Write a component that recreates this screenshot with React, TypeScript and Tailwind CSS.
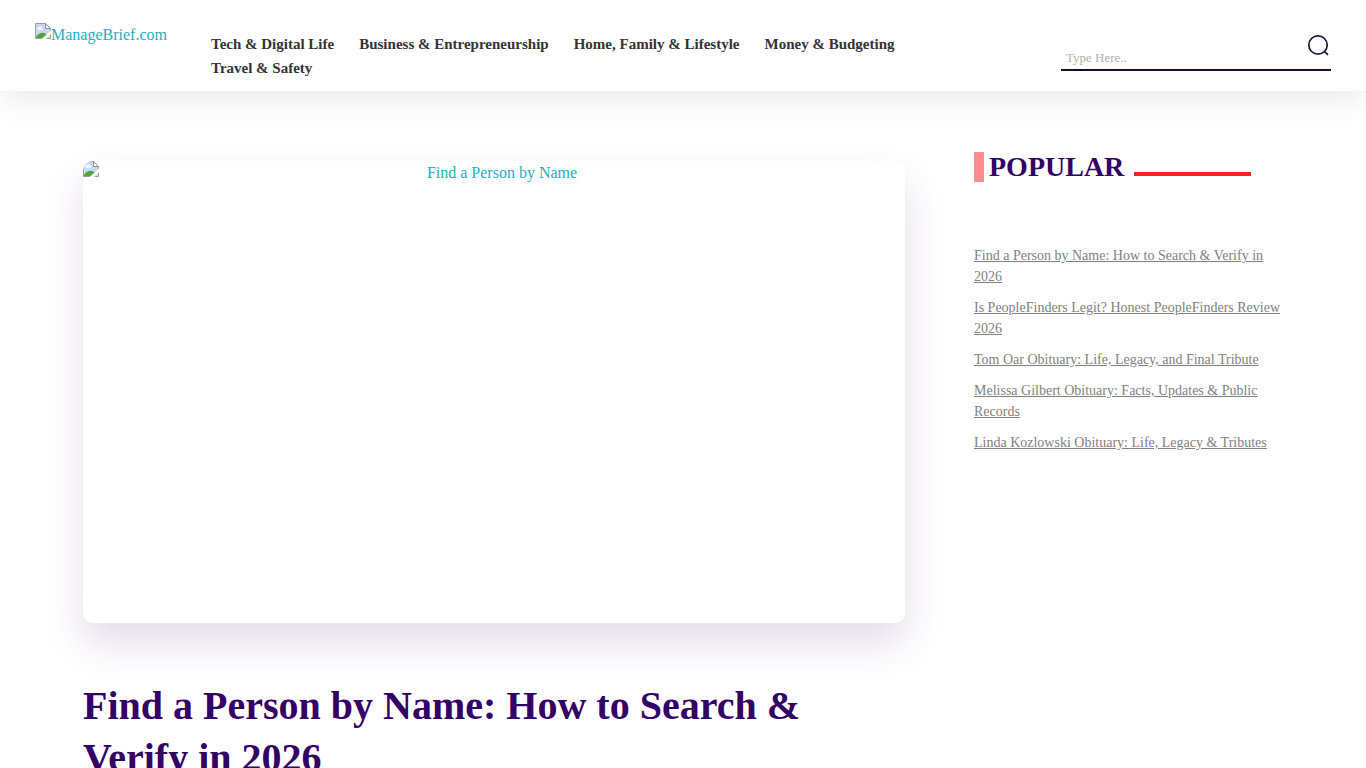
import { useState } from 'react';

const navLinks = [
  'Tech & Digital Life',
  'Business & Entrepreneurship',
  'Home, Family & Lifestyle',
  'Money & Budgeting',
  'Travel & Safety',
];

const popularPosts = [
  'Find a Person by Name: How to Search & Verify in 2026',
  'Is PeopleFinders Legit? Honest PeopleFinders Review 2026',
  'Tom Oar Obituary: Life, Legacy, and Final Tribute',
  'Melissa Gilbert Obituary: Facts, Updates & Public Records',
  'Linda Kozlowski Obituary: Life, Legacy & Tributes',
];

function MissingImageIcon() {
  return (
    <svg
      viewBox="0 0 16 16"
      className="w-4 h-4 flex-none"
      aria-hidden="true"
    >
      <path d="M0.5 0.5H10.5L15.5 5.5V15.5H0.5Z" fill="#c9d9f4" />
      <path d="M2.6 6.5a1.5 1.5 0 0 1 1.4-2 1.9 1.9 0 0 1 3.5.5A1.1 1.1 0 0 1 7.4 6.8H3.2Z" fill="#fff" />
      <path d="M1 15V14C3 11.2 5.2 9.8 7.5 9.8S11 10.8 12.2 12.5L10 15Z" fill="#4ea63a" />
      <path d="M0.5 15.5V0.5H10.5L15.5 5.5V15.5Z" fill="none" stroke="#9c9c9c" />
      <path d="M10.5 0.5V5.5H15.5Z" fill="#fff" stroke="#8f8f8f" />
      <path d="M6.5 16L16 7.5V11L11 16Z" fill="#fff" />
    </svg>
  );
}

function Header() {
  const [search, setSearch] = useState('');

  return (
    <header className="flex items-start bg-white px-[35px] pb-[11px] shadow-[0_10px_30px_rgba(0,0,0,0.08)]">
      <a
        href="#"
        className="mt-[23px] flex w-[176px] flex-none items-start text-[#1cafc0]"
      >
        <MissingImageIcon />
        <span className="text-base leading-6">ManageBrief.com</span>
      </a>
      <nav className="mt-8 min-w-0 flex-1">
        <ul className="flex flex-wrap gap-x-[25px]">
          {navLinks.map((link) => (
            <li key={link}>
              <a
                href="#"
                className="block text-[15px] leading-6 font-bold text-[#333]"
              >
                {link}
              </a>
            </li>
          ))}
        </ul>
      </nav>
      <form
        role="search"
        onSubmit={(e) => e.preventDefault()}
        className="mt-8 ml-12 flex h-[39px] w-[270px] flex-none items-start border-b-2 border-[#1b0a2a]"
      >
        <input
          type="text"
          aria-label="Search"
          value={search}
          onChange={(e) => setSearch(e.target.value)}
          placeholder="Type Here.."
          className="mt-4 h-5 min-w-0 flex-1 bg-transparent px-[5px] text-[13px] text-[#333] placeholder:text-[#b0b0b0] focus:outline-none"
        />
        <button type="submit" aria-label="Search" className="mt-[2px]">
          <svg
            viewBox="0 0 24 24"
            className="h-6 w-6"
            fill="none"
            stroke="#14173a"
            strokeWidth="1.7"
          >
            <circle cx="11" cy="11" r="9.2" />
            <path d="M17.4 17.4L21 20.8" />
          </svg>
        </button>
      </form>
    </header>
  );
}

function Sidebar() {
  return (
    <aside className="w-[309px] flex-none">
      <div className="mt-[-10px] flex h-[31px] items-center">
        <span className="h-[30px] w-[10px] bg-[#ff8c8c]" />
        <h2 className="ml-[5px] text-[28px] leading-[30px] font-bold text-[#330066]">
          POPULAR
        </h2>
        <span className="mt-[15px] ml-[10px] h-1 w-[117px] bg-[#ff2222]" />
      </div>
      <ul className="mt-[63px] space-y-[10px]">
        {popularPosts.map((post) => (
          <li key={post} className="text-sm leading-[21px]">
            <a href="#" className="text-[#808080] underline">
              {post}
            </a>
          </li>
        ))}
      </ul>
    </aside>
  );
}

export default function App() {
  return (
    <div className="min-h-screen bg-white font-['Liberation_Serif',serif]">
      <Header />
      <main className="mx-auto mt-[70px] flex max-w-[1200px] items-start gap-[69px]">
        <article className="min-w-0 flex-1">
          <a
            href="#"
            className="flex h-[462px] items-start overflow-hidden rounded-[10px] bg-white text-[#1cafc0] shadow-[0_20px_40px_rgba(56,0,98,0.14)]"
          >
            <MissingImageIcon />
            <span className="flex-1 text-center text-base leading-6">
              Find a Person by Name
            </span>
          </a>
          <h1 className="mt-[57px] text-[40px] leading-[52px] font-bold text-[#330066]">
            Find a Person by Name: How to Search & Verify in 2026
          </h1>
        </article>
        <Sidebar />
      </main>
    </div>
  );
}
